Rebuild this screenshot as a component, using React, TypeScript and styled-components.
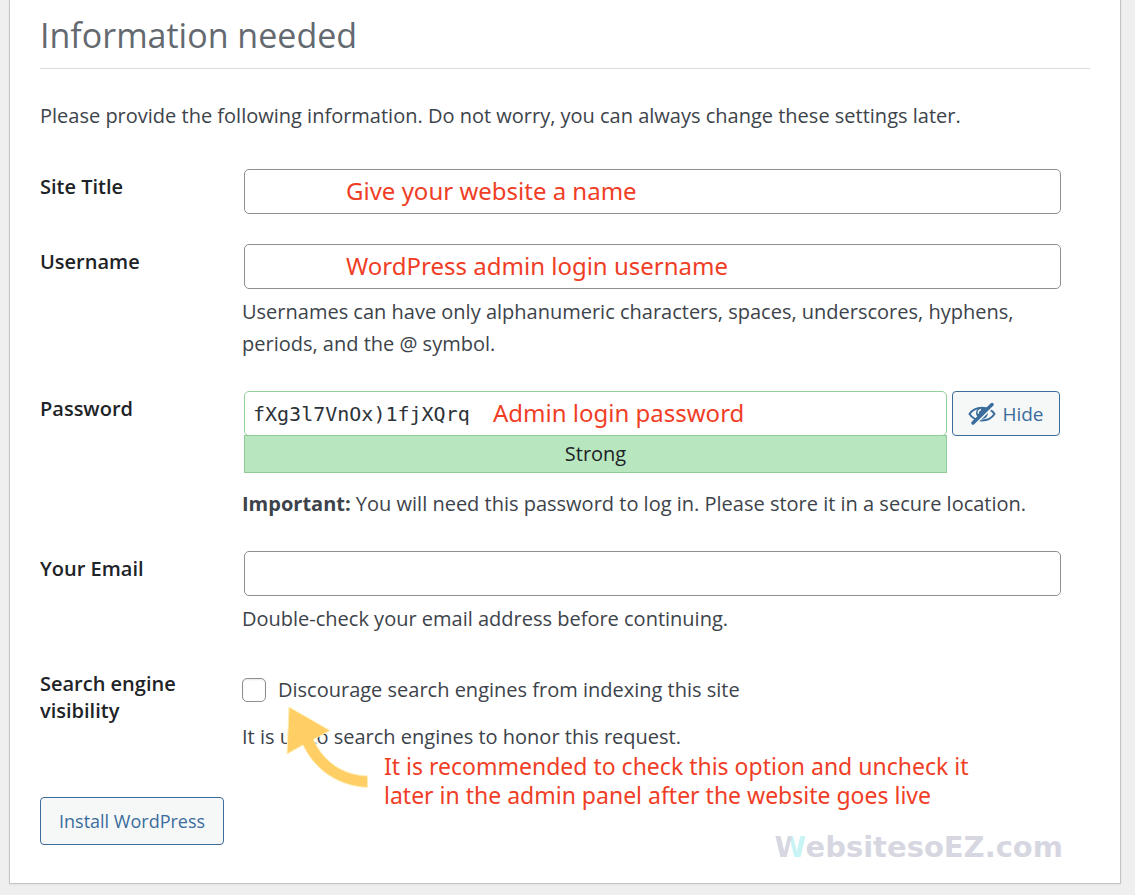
import React from "react";
import styled, { createGlobalStyle } from "styled-components";

const GlobalStyle = createGlobalStyle`
  * { box-sizing: border-box; }
  body {
    margin: 0;
    background: #efefef;
    color: #3c434a;
    font: 20px/32px "Open Sans", "Noto Sans", sans-serif;
  }
`;

const Panel = styled.main`
  position: relative;
  margin: 0 14px 11px 9px;
  padding: 7px 30px 38px;
  background: #fff;
  border: 1px solid #c3c4c7;
  border-top: 0;
  box-shadow: 0 1px 2px rgba(0, 0, 0, 0.06);
`;

const Heading = styled.h1`
  margin: 0;
  padding-bottom: 5px;
  border-bottom: 1px solid #dcdcde;
  color: #646970;
  font-size: 34px;
  line-height: 56px;
  font-weight: 400;
`;

const Intro = styled.p`
  margin: 31px 0 37px;
`;

const Form = styled.form`
  display: flex;
  flex-direction: column;
  gap: 30px;
`;

const Row = styled.div`
  display: grid;
  grid-template-columns: 202px minmax(0, 1fr);
  padding-right: 29px;
`;

const Label = styled.label`
  padding: 4px 40px 0 0;
  color: #1d2327;
  font-size: 20px;
  line-height: 27px;
  font-weight: 600;
`;

const Field = styled.div`
  position: relative;
  margin-left: 2px;
`;

const TextInput = styled.input<{ $strong?: boolean }>`
  display: block;
  width: 100%;
  height: 45px;
  padding: 0 8px;
  border: 1px solid ${(p) => (p.$strong ? "#8fd19a" : "#8c8f94")};
  border-radius: 5px;
  background: #fff;
  color: #2c3338;
  font-family: ${(p) => (p.$strong ? '"DejaVu Sans Mono", monospace' : "inherit")};
  font-size: 20px;
`;

const PasswordLine = styled.div`
  display: flex;
  align-items: flex-start;
  gap: 5px;
  padding-right: 1px;
`;

const PasswordBox = styled.div`
  position: relative;
  flex: 1;
  margin-left: 2px;
`;

const Meter = styled.div`
  margin-top: -1px;
  border: 1px solid #8fca98;
  background: #b8e6bf;
  color: #1d2327;
  line-height: 36px;
  text-align: center;
`;

const Button = styled.button`
  display: inline-flex;
  align-items: center;
  justify-content: center;
  gap: 6px;
  border: 1px solid #3a6d9c;
  border-radius: 4px;
  background: #f6f7f7;
  color: #3a6d9c;
  font: 19px/32px "Open Sans", "Noto Sans", sans-serif;
`;

const HideButton = styled(Button)`
  width: 108px;
  height: 45px;
  padding: 0;
`;

const InstallButton = styled(Button)`
  height: 48px;
  margin-top: 43px;
  padding: 0 18px;
  font-size: 18px;
`;

const Description = styled.p<{ $spaced?: boolean }>`
  margin: ${(p) => (p.$spaced ? "15px" : "7px")} 0 1px;
`;

const Choice = styled.div`
  position: relative;
  padding-top: 8px;
`;

const CheckLabel = styled.label`
  display: flex;
  align-items: center;
  gap: 12px;
`;

const Checkbox = styled.input`
  appearance: none;
  width: 24px;
  height: 24px;
  margin: 0;
  border: 1px solid #8c8f94;
  border-radius: 5px;
  background: #fff;
  box-shadow: inset 0 1px 2px rgba(0, 0, 0, 0.1);
  &:checked { background: #3a6d9c; }
`;

const Note = styled.span<{ $left: number; $top: number; $small?: boolean }>`
  position: absolute;
  left: ${(p) => p.$left}px;
  top: ${(p) => p.$top}px;
  color: #f03e26;
  font-family: "Noto Sans", "Open Sans", sans-serif;
  font-size: ${(p) => (p.$small ? "23px" : "24px")};
  line-height: 29px;
  white-space: nowrap;
  pointer-events: none;
`;

const Arrow = styled.svg`
  position: absolute;
  left: 42px;
  top: 38px;
  pointer-events: none;
`;

const Watermark = styled.div`
  position: absolute;
  right: 57px;
  bottom: 20px;
  color: #d7d7e2;
  font: 700 29px/32px "DejaVu Sans", sans-serif;
`;

const TintedLetter = styled.span`
  background: linear-gradient(100deg, #d7d7e2 48%, #c8f4f6 52%);
  background-clip: text;
  color: transparent;
`;

const HiddenEye = () => (
  <svg width="28" height="24" viewBox="0 0 28 24" fill="none" aria-hidden="true">
    <path d="M1.5 12C7 3.500 21 3.500 26.500 12C21 20.500 7 20.500 1.500 12Z" stroke="#3a6d9c" strokeWidth="2" />
    <circle cx="14" cy="11" r="6" fill="#3a6d9c" />
    <path d="M13 7.500C11 8 10 9.500 10.300 11.500" stroke="#f6f7f7" strokeWidth="1.500" />
    <path d="M7 22L27 3" stroke="#f6f7f7" strokeWidth="2" />
    <path d="M5 21L24 2.500" stroke="#3a6d9c" strokeWidth="3.500" strokeLinecap="round" />
  </svg>
);

export default function App() {
  return (
    <>
      <GlobalStyle />
      <Panel>
        <Heading>Information needed</Heading>
        <Intro>
          Please provide the following information. Do not worry, you can always change these settings later.
        </Intro>
        <Form id="setup" onSubmit={(e) => e.preventDefault()}>
          <Row>
            <Label htmlFor="title">Site Title</Label>
            <Field>
              <TextInput id="title" type="text" />
              <Note $left={102} $top={7}>Give your website a name</Note>
            </Field>
          </Row>
          <Row>
            <Label htmlFor="user">Username</Label>
            <div>
              <Field>
                <TextInput id="user" type="text" />
                <Note $left={102} $top={7}>WordPress admin login username</Note>
              </Field>
              <Description>
                Usernames can have only alphanumeric characters, spaces, underscores, hyphens, periods, and the @ symbol.
              </Description>
            </div>
          </Row>
          <Row>
            <Label htmlFor="password">Password</Label>
            <div>
              <PasswordLine>
                <PasswordBox>
                  <TextInput id="password" type="text" defaultValue="fXg3l7VnOx)1fjXQrq" spellCheck={false} $strong />
                  <Meter>Strong</Meter>
                  <Note $left={249} $top={7}>Admin login password</Note>
                </PasswordBox>
                <HideButton type="button">
                  <HiddenEye />
                  Hide
                </HideButton>
              </PasswordLine>
              <Description $spaced>
                <strong>Important:</strong> You will need this password to log in. Please store it in a secure location.
              </Description>
            </div>
          </Row>
          <Row>
            <Label htmlFor="email">Your Email</Label>
            <div>
              <Field>
                <TextInput id="email" type="email" />
              </Field>
              <Description>Double-check your email address before continuing.</Description>
            </div>
          </Row>
          <Row>
            <Label as="span">Search engine visibility</Label>
            <Choice>
              <CheckLabel>
                <Checkbox type="checkbox" />
                Discourage search engines from indexing this site
              </CheckLabel>
              <Description $spaced>It is up to search engines to honor this request.</Description>
              <Arrow width="88" height="86" viewBox="0 0 88 86" aria-hidden="true">
                <path
                  d="M5 3L46 26.500L29.500 35.500C39 57 58 71 83.500 72V83.500C54 82 31 66 19 41L3 50Z"
                  fill="#ffcf66"
                  stroke="#fff0b8"
                  strokeWidth="1"
                />
              </Arrow>
              <Note $left={142} $top={86} $small>
                It is recommended to check this option and uncheck it
                <br />
                later in the admin panel after the website goes live
              </Note>
            </Choice>
          </Row>
        </Form>
        <InstallButton type="submit" form="setup">Install WordPress</InstallButton>
        <Watermark>
          <TintedLetter>W</TintedLetter>ebsitesoEZ.com
        </Watermark>
      </Panel>
    </>
  );
}
